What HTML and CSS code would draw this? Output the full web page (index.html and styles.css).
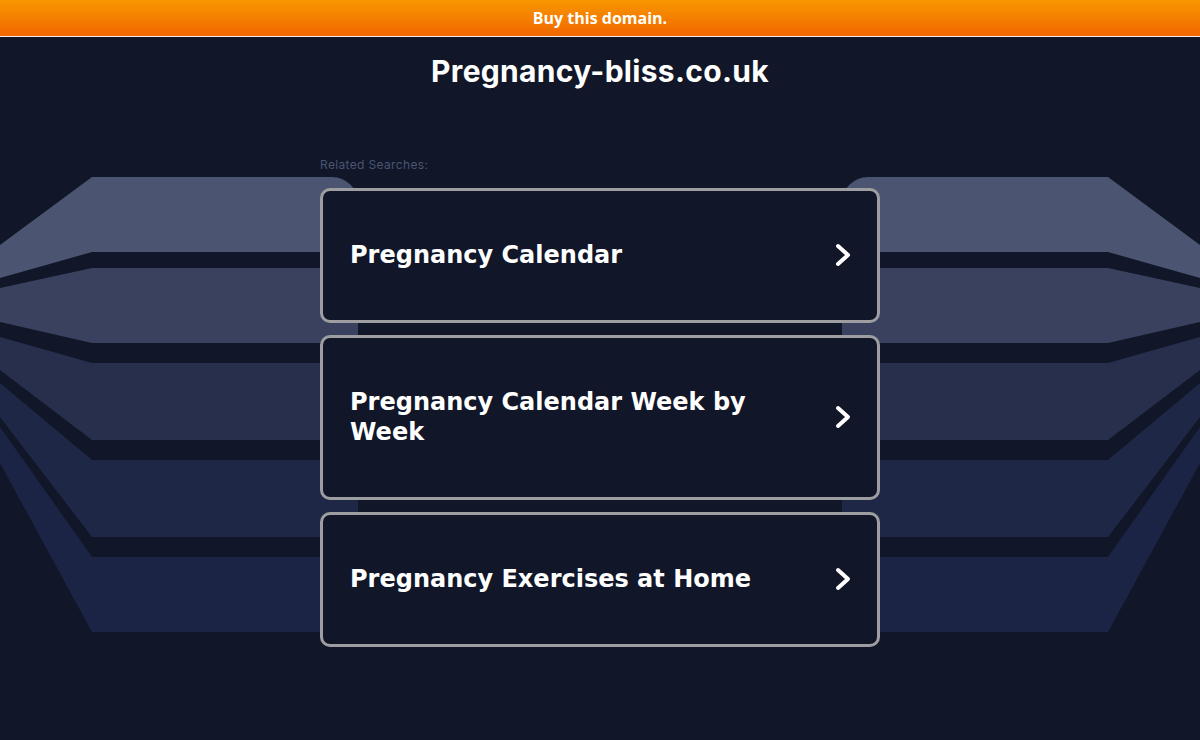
FILE: index.html
```
<!DOCTYPE html>
<html lang="en">
<head>
    <meta charset="UTF-8">
    <meta name="viewport" content="width=device-width, initial-scale=1.0">
    <title>Pregnancy-bliss.co.uk</title>
    <link rel="stylesheet" href="styles.css">
</head>
<body>
    <!-- Decorative background bands -->
    <svg class="bg-art" viewBox="0 0 1200 740" aria-hidden="true">
        <defs>
            <clipPath id="clip-left">
                <rect x="-60" y="177" width="418" height="455" rx="26" />
            </clipPath>
            <clipPath id="clip-right">
                <rect x="842" y="177" width="418" height="455" rx="26" />
            </clipPath>
        </defs>
        <g clip-path="url(#clip-left)">
            <polygon class="band band-1" points="0,245 92,177 400,177 400,252 92,252 0,278" />
            <polygon class="band band-2" points="0,288 92,268 400,268 400,343 92,343 0,322" />
            <polygon class="band band-3" points="0,337 92,363 400,363 400,440 92,440 0,370" />
            <polygon class="band band-4" points="0,383 92,460 400,460 400,537 92,537 0,417" />
            <polygon class="band band-5" points="0,427 92,557 400,557 400,632 92,632 0,463" />
        </g>
        <g clip-path="url(#clip-right)">
            <polygon class="band band-1" points="1200,245 1108,177 800,177 800,252 1108,252 1200,278" />
            <polygon class="band band-2" points="1200,288 1108,268 800,268 800,343 1108,343 1200,322" />
            <polygon class="band band-3" points="1200,337 1108,363 800,363 800,440 1108,440 1200,370" />
            <polygon class="band band-4" points="1200,383 1108,460 800,460 800,537 1108,537 1200,417" />
            <polygon class="band band-5" points="1200,427 1108,557 800,557 800,632 1108,632 1200,463" />
        </g>
    </svg>

    <div class="topbar">Buy this domain.</div>

    <main class="content">
        <h1 class="domain">Pregnancy-bliss.co.uk</h1>

        <section class="related">
            <p class="related-label">Related Searches:</p>
            <ul class="link-list">
                <li>
                    <a class="link-card" href="#">
                        <span class="link-text">Pregnancy Calendar</span>
                        <svg class="chevron" viewBox="0 0 18 26"><polyline points="4,4 14,13 4,22" /></svg>
                    </a>
                </li>
                <li>
                    <a class="link-card" href="#">
                        <span class="link-text">Pregnancy Calendar Week by Week</span>
                        <svg class="chevron" viewBox="0 0 18 26"><polyline points="4,4 14,13 4,22" /></svg>
                    </a>
                </li>
                <li>
                    <a class="link-card" href="#">
                        <span class="link-text">Pregnancy Exercises at Home</span>
                        <svg class="chevron" viewBox="0 0 18 26"><polyline points="4,4 14,13 4,22" /></svg>
                    </a>
                </li>
            </ul>
        </section>
    </main>
</body>
</html>
```

FILE: styles.css
```
body {
    margin: 0;
    background-color: #111729;
    font-family: "Open Sans", "DejaVu Sans", sans-serif;
    color: #fff;
    position: relative;
    min-height: 740px;
    overflow: hidden;
}

/* Background art sits behind the content */
.bg-art {
    position: absolute;
    top: 0;
    left: 0;
    width: 1200px;
    height: 740px;
    z-index: 0;
}

.band-1 { fill: #4b5572; }
.band-2 { fill: #39415e; }
.band-3 { fill: #272f4d; }
.band-4 { fill: #1f2746; }
.band-5 { fill: #1c2446; }

.topbar {
    position: relative;
    z-index: 1;
    height: 36px;
    line-height: 36px;
    text-align: center;
    font-size: 16px;
    font-weight: 700;
    background: linear-gradient(to bottom, #f89700, #f16700);
    border-bottom: 1px solid #f3efe8;
}

.content {
    position: relative;
    z-index: 1;
}

.domain {
    margin: 16px 0 0;
    text-align: center;
    font-family: Inter, "Open Sans", sans-serif;
    font-size: 30px;
    line-height: 36px;
    font-weight: 700;
    letter-spacing: 0.3px;
}

.related {
    width: 560px;
    margin: 69px auto 0;
}

.related-label {
    margin: 0 0 16px;
    font-family: Inter, "Open Sans", sans-serif;
    font-size: 12px;
    line-height: 14px;
    letter-spacing: 0.35px;
    color: #4b5472;
}

.link-list {
    list-style: none;
    margin: 0;
    padding: 0;
    display: flex;
    flex-direction: column;
    gap: 12px;
}

.link-card {
    display: flex;
    align-items: center;
    gap: 30px;
    padding: 49px 25px 50px 27px;
    background-color: #111628;
    border: 3px solid #9e9ea2;
    border-radius: 10px;
    color: #fff;
    text-decoration: none;
}

.link-text {
    flex: 1;
    font-family: "DejaVu Sans", Verdana, sans-serif;
    font-size: 24px;
    line-height: 30px;
    font-weight: 700;
}

.chevron {
    width: 18px;
    height: 26px;
    flex-shrink: 0;
}

.chevron polyline {
    fill: none;
    stroke: #fff;
    stroke-width: 4;
    stroke-linecap: round;
    stroke-linejoin: round;
}
```
